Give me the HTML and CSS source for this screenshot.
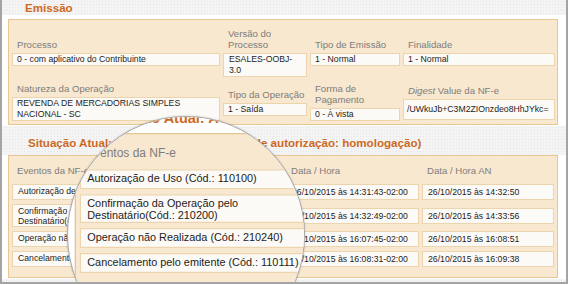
FILE: index.html
```html
<!DOCTYPE html>
<html lang="pt-BR">
<head>
<meta charset="utf-8">
<title>NF-e</title>
<link rel="stylesheet" href="styles.css">
</head>
<body>
<div class="frame">
  <div class="band band-top"><h2 class="title title-a">Emissão</h2></div>
  <section class="panel panel-emissao">
    <div class="cell"><span class="lbl">Processo</span><div class="fld">0 - com aplicativo do Contribuinte</div></div>
    <div class="cell"><span class="lbl">Versão do Processo</span><div class="fld fld-ver">ESALES-OOBJ-3.0</div></div>
    <div class="cell"><span class="lbl">Tipo de Emissão</span><div class="fld">1 - Normal</div></div>
    <div class="cell"><span class="lbl">Finalidade</span><div class="fld">1 - Normal</div></div>
    <div class="cell"><span class="lbl">Natureza da Operação</span><div class="fld">REVENDA DE MERCADORIAS SIMPLES NACIONAL - SC</div></div>
    <div class="cell"><span class="lbl">Tipo da Operação</span><div class="fld">1 - Saída</div></div>
    <div class="cell"><span class="lbl">Forma de Pagamento</span><div class="fld">0 - À vista</div></div>
    <div class="cell"><span class="lbl"><i>Digest</i> Value da NF-e</span><div class="fld fld-digest">/UWkuJb+C3M2ZIOnzdeo8HhJYkc=</div></div>
  </section>
  <div class="band band-sit"><h2 class="title title-b">Situação Atual: AUTORIZADA (Ambiente de autorização: homologação)</h2></div>
  <section class="panel panel-eventos">
    <span class="lbl hdr">Eventos da NF-e</span>
    <span class="lbl hdr">Data / Hora</span>
    <span class="lbl hdr">Data / Hora AN</span>
    <div class="fld ev">Autorização de Uso (Cód.: 110100)</div>
    <div class="fld dt">26/10/2015 às 14:31:43-02:00</div>
    <div class="fld dt">26/10/2015 às 14:32:50</div>
    <div class="fld ev">Confirmação da Operação pelo<br>Destinatário(Cód.: 210200)</div>
    <div class="fld dt">26/10/2015 às 14:32:49-02:00</div>
    <div class="fld dt">26/10/2015 às 14:33:56</div>
    <div class="fld ev">Operação não Realizada (Cód.: 210240)</div>
    <div class="fld dt">26/10/2015 às 16:07:45-02:00</div>
    <div class="fld dt">26/10/2015 às 16:08:51</div>
    <div class="fld ev">Cancelamento pelo emitente (Cód.: 110111)</div>
    <div class="fld dt">26/10/2015 às 16:08:31-02:00</div>
    <div class="fld dt">26/10/2015 às 16:09:38</div>
  </section>
  <div class="band band-bottom"></div>

  <div class="lens">
    <div class="lens-view">
      <div class="lens-spacer"></div>
      <div class="band band-sit band-plain"><h2 class="title title-b">Situação Atual: AUTORIZADA (Ambiente de autorização: homologação)</h2></div>
      <section class="panel panel-eventos">
        <span class="lbl hdr">Eventos da NF-e</span>
        <span class="lbl hdr">Data / Hora</span>
        <span class="lbl hdr">Data / Hora AN</span>
        <div class="fld ev">Autorização de Uso (Cód.: 110100)</div>
        <div class="fld dt">26/10/2015 às 14:31:43-02:00</div>
        <div class="fld dt">26/10/2015 às 14:32:50</div>
        <div class="fld ev">Confirmação da Operação pelo<br>Destinatário(Cód.: 210200)</div>
        <div class="fld dt">26/10/2015 às 14:32:49-02:00</div>
        <div class="fld dt">26/10/2015 às 14:33:56</div>
        <div class="fld ev">Operação não Realizada (Cód.: 210240)</div>
        <div class="fld dt">26/10/2015 às 16:07:45-02:00</div>
        <div class="fld dt">26/10/2015 às 16:08:51</div>
        <div class="fld ev">Cancelamento pelo emitente (Cód.: 110111)</div>
        <div class="fld dt">26/10/2015 às 16:08:31-02:00</div>
        <div class="fld dt">26/10/2015 às 16:09:38</div>
      </section>
    </div>
  </div>
</div>
</body>
</html>
```
FILE: styles.css
```css
html, body {
  margin: 0;
  padding: 0;
  background: #ffffff;
}

.frame {
  position: relative;
  width: 564px;
  height: 282px;
  border: 2px solid #a4a4a4;
  border-top: 0;
  overflow: hidden;
  background: #ffffff;
  font-family: "Liberation Sans", Arial, sans-serif;
}

.band {
  background-color: #f4f4f4;
  background-image: radial-gradient(#e6e6e6 0.6px, transparent 0.8px);
  background-size: 3px 3px;
}

.band-plain {
  background: #ffffff;
}

.band-top { height: 15px; }
.band-sit { height: 29px; margin-top: 1px; }
.band-bottom { height: 4px; margin-top: 1px; }

.title {
  margin: 0;
  font-size: 11.6px;
  font-weight: bold;
  line-height: 15px;
  color: #cc6a25;
}

.title-a { padding-left: 23px; }
.title-b { padding-left: 26px; padding-top: 9px; }

.panel {
  margin: 0 8px 0 6px;
  background: #f8e8cf;
  border: 1px solid #e6c792;
  box-sizing: border-box;
}

.panel-emissao {
  margin-top: 4px;
  display: grid;
  grid-template-columns: 208px 84px 90px 152px;
  column-gap: 3px;
  row-gap: 6px;
  padding: 8px 2px 3px 3px;
}

.cell {
  display: flex;
  flex-direction: column;
  justify-content: center;
  gap: 3px;
  min-width: 0;
}

.lbl {
  display: block;
  font-size: 9.6px;
  line-height: 11px;
  color: #7d7d7d;
  padding-left: 5px;
}

.fld {
  background: #fcfaf6;
  border: 1px solid #ecd5ae;
  font-size: 8.7px;
  line-height: 11px;
  color: #1c1c1c;
  padding: 0 4px;
  overflow: hidden;
}

.fld-ver { padding-left: 5px; padding-right: 8px; }

.fld-digest {
  white-space: nowrap;
  padding: 4px 2px 4px 3px;
}

.panel-eventos {
  display: grid;
  grid-template-columns: 271px 133px 132px;
  column-gap: 3px;
  row-gap: 4px;
  align-items: center;
  padding: 9px 2px 10px 3px;
}

.hdr { margin-bottom: 4px; }

.ev {
  line-height: 10px;
  padding: 1px 5px 0;
  min-height: 13px;
}

.dt {
  line-height: 10px;
  padding: 2px 5px;
}

.lens {
  position: absolute;
  left: 65px;
  top: 116px;
  width: 236px;
  height: 236px;
  border: 1px solid #a9a9a9;
  border-radius: 50%;
  overflow: hidden;
  background: #ffffff;
  box-shadow: 0 0 2px rgba(0, 0, 0, 0.25);
}

.lens-view {
  position: absolute;
  left: -66px;
  top: -117px;
  width: 564px;
  transform-origin: -261px 238px;
  transform: scale(1.25);
}

.lens-spacer { height: 124px; }
```
